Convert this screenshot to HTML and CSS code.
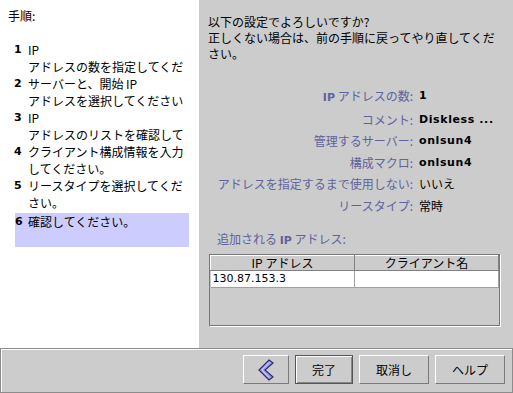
FILE: index.html
```html
<!DOCTYPE html>
<html lang="ja">
<head>
    <meta charset="UTF-8">
    <title>確認</title>
    <link rel="stylesheet" href="styles.css">
</head>
<body>
    <div class="wizard">
        <div class="main">
            <aside class="steps">
                <div class="steps-title">手順:</div>
                <ol class="step-list">
                    <li><span class="num">1</span><span class="txt">IP<br>アドレスの数を指定してくだ</span></li>
                    <li><span class="num">2</span><span class="txt">サーバーと、開始 IP<br>アドレスを選択してください</span></li>
                    <li><span class="num">3</span><span class="txt">IP<br>アドレスのリストを確認して</span></li>
                    <li><span class="num">4</span><span class="txt">クライアント構成情報を入力<br>してください。</span></li>
                    <li><span class="num">5</span><span class="txt">リースタイプを選択してくだ<br>さい。</span></li>
                    <li class="current"><span class="num">6</span><span class="txt">確認してください。</span></li>
                </ol>
            </aside>

            <section class="content">
                <p class="intro">以下の設定でよろしいですか?<br>正しくない場合は、前の手順に戻ってやり直してくだ<br>さい。</p>

                <dl class="summary">
                    <dt><span class="latin">IP</span> アドレスの数:</dt><dd class="bold">1</dd>
                    <dt>コメント:</dt><dd class="bold">Diskless ...</dd>
                    <dt>管理するサーバー:</dt><dd class="bold">onlsun4</dd>
                    <dt>構成マクロ:</dt><dd class="bold">onlsun4</dd>
                    <dt>アドレスを指定するまで使用しない:</dt><dd>いいえ</dd>
                    <dt>リースタイプ:</dt><dd>常時</dd>
                </dl>

                <div class="added-title">追加される <span class="latin">IP</span> アドレス:</div>
                <div class="table-box">
                    <table class="addr-table">
                        <thead>
                            <tr><th>IP アドレス</th><th>クライアント名</th></tr>
                        </thead>
                        <tbody>
                            <tr><td>130.87.153.3</td><td></td></tr>
                        </tbody>
                    </table>
                </div>
            </section>
        </div>

        <footer class="buttons">
            <button class="btn btn-back" aria-label="戻る">
                <svg width="16" height="22" viewBox="0 0 16 22">
                    <polygon points="11,1 15,4 7,11 15,18 11,21 1,11" fill="#9c9cf0" stroke="#2e2e66" stroke-width="1.2" stroke-linejoin="miter"/>
                    <polyline points="11,3.5 4,11 11,18.5" fill="none" stroke="#d8d8ff" stroke-width="1"/>
                </svg>
            </button>
            <button class="btn btn-default">完了</button>
            <button class="btn btn-wide">取消し</button>
            <button class="btn btn-wide">ヘルプ</button>
        </footer>
    </div>
</body>
</html>
```

FILE: styles.css
```css
body {
    margin: 0;
    padding: 0;
    font-family: "Noto Sans CJK JP", "DejaVu Sans", sans-serif;
    font-size: 12px;
    color: #000;
    background: #cccccc;
    overflow: hidden;
}

.wizard {
    width: 513px;
    height: 393px;
    display: flex;
    flex-direction: column;
}

.main {
    display: flex;
    height: 348px;
}

/* left: list of steps */
.steps {
    width: 199px;
    background: #ffffff;
    overflow: hidden;
}

.steps-title {
    padding: 7px 0 0 8px;
    line-height: 17px;
}

.step-list {
    list-style: none;
    margin: 17px 0 0 0;
    padding: 0 10px 0 14px;
}

.step-list li {
    display: flex;
    line-height: 17px;
    white-space: nowrap;
}

.step-list .num {
    width: 14px;
    flex: none;
    font-family: "DejaVu Sans", sans-serif;
    font-weight: bold;
    font-size: 11px;
}

.step-list li.current {
    background: #ccccff;
    height: 34px;
    margin-top: 2px;
    margin-left: 1px;
}

.step-list li.current .num {
    width: 13px;
}

/* right: summary */
.content {
    flex: 1;
    background: #cccccc;
    padding: 14px 12px 0 9px;
}

.intro {
    margin: 0;
    line-height: 16px;
}

.summary {
    display: grid;
    grid-template-columns: 196px auto;
    column-gap: 6px;
    margin: 23px 0 0 9px;
    line-height: 21.6px;
}

.summary dt {
    text-align: right;
    color: #62629c;
}

.summary dd {
    margin: 0;
}

.summary dd.bold {
    font-family: "DejaVu Sans", sans-serif;
    font-weight: bold;
    font-size: 11px;
    letter-spacing: 0.6px;
}

.latin {
    font-family: "DejaVu Sans", sans-serif;
    font-weight: bold;
    font-size: 11px;
}

.added-title {
    color: #62629c;
    margin: 14px 0 0 9px;
    line-height: 16px;
}

.table-box {
    margin: 5px 0 0 1px;
    width: 289px;
    height: 70px;
    border: 1px solid #777777;
    box-shadow: 1px 1px 0 #ffffff;
    background: #cccccc;
}

.addr-table {
    width: 100%;
    border-collapse: collapse;
    table-layout: fixed;
}

.addr-table th {
    font-weight: normal;
    height: 14px;
    line-height: 14px;
    padding: 0;
    background: #cccccc;
    border-top: 1px solid #ffffff;
    border-left: 1px solid #ffffff;
    border-right: 1px solid #808080;
    border-bottom: 1px solid #808080;
    text-align: center;
}

.addr-table th:first-child {
    width: 143px;
}

.addr-table td {
    background: #ffffff;
    height: 16px;
    line-height: 16px;
    padding: 0 0 0 2px;
    border-right: 1px solid #a0a0a0;
    border-bottom: 1px solid #a0a0a0;
    font-family: "DejaVu Sans", sans-serif;
    font-size: 11px;
}

/* bottom button bar */
.buttons {
    flex: 1;
    display: flex;
    justify-content: flex-end;
    align-items: flex-start;
    gap: 6px;
    padding: 6px 7px 0 0;
    border: 1px solid #8c8c8c;
    box-shadow: inset 1px 1px 0 #ffffff;
    background: #cccccc;
}

.btn {
    height: 29px;
    margin: 0;
    padding: 0;
    background: #cccccc;
    font-family: "Noto Sans CJK JP", sans-serif;
    font-size: 12px;
    color: #000;
    border-top: 1px solid #ffffff;
    border-left: 1px solid #ffffff;
    border-right: 1px solid #7a7a7a;
    border-bottom: 1px solid #7a7a7a;
    display: flex;
    align-items: center;
    justify-content: center;
}

.btn-back {
    width: 46px;
}

.btn-back svg {
    display: block;
}

.btn-default {
    width: 58px;
    border: 1px solid #555555;
    box-shadow: inset 1px 1px 0 #ffffff, inset -1px -1px 0 #888888;
}

.btn-wide {
    width: 70px;
}
```
